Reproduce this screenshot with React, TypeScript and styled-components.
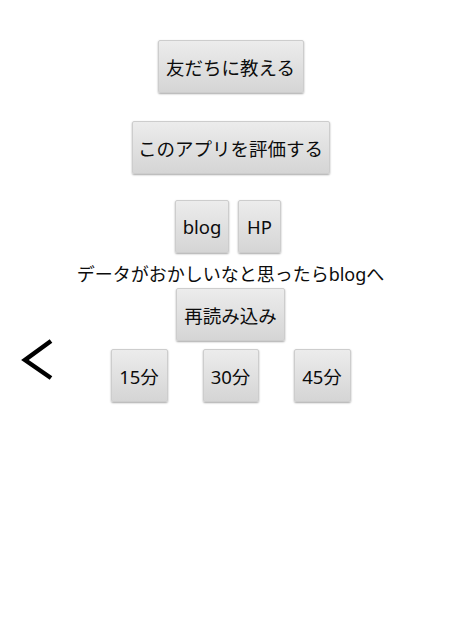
import styled, { createGlobalStyle } from "styled-components";

const GlobalStyle = createGlobalStyle`
  html, body {
    margin: 0;
    padding: 0;
    background: #ffffff;
  }
  body {
    font-family: "Noto Sans", "Noto Sans CJK JP", sans-serif;
    color: #111111;
  }
`;

const Screen = styled.div`
  position: relative;
  width: 461px;
  height: 640px;
  display: flex;
  flex-direction: column;
  align-items: center;
  padding-top: 40px;
  box-sizing: border-box;
`;

const Button = styled.button<{ $w: number; $mt?: number }>`
  width: ${(p) => p.$w}px;
  height: 53px;
  margin-top: ${(p) => p.$mt ?? 0}px;
  padding: 0;
  display: flex;
  align-items: center;
  justify-content: center;
  font-family: "Noto Sans", "Noto Sans CJK JP", sans-serif;
  font-size: 18.5px;
  color: #0c0c0c;
  background: linear-gradient(#ececec, #d5d5d5);
  border: 1px solid #cdcdcd;
  border-radius: 2px;
  box-shadow: 0 1px 2px rgba(0, 0, 0, 0.35);
  box-sizing: border-box;
  white-space: nowrap;
`;

const Row = styled.div<{ $gap: number; $mt: number; $shift?: number }>`
  display: flex;
  gap: ${(p) => p.$gap}px;
  margin-top: ${(p) => p.$mt}px;
  padding-right: ${(p) => p.$shift ?? 0}px;
`;

const Notice = styled.div`
  margin-top: 9px;
  font-size: 18px;
  line-height: 24px;
  color: #0c0c0c;
  white-space: nowrap;
`;

const BackArrow = styled.svg`
  position: absolute;
  left: 18px;
  top: 336px;
`;

export default function App() {
  return (
    <>
      <GlobalStyle />
      <Screen>
        <Button $w={146}>友だちに教える</Button>
        <Button $w={198} $mt={28}>このアプリを評価する</Button>
        <Row $gap={9} $mt={26} $shift={5}>
          <Button $w={54}>blog</Button>
          <Button $w={43}>HP</Button>
        </Row>
        <Notice>データがおかしいなと思ったらblogへ</Notice>
        <Button $w={109} $mt={2}>再読み込み</Button>
        <Row $gap={35} $mt={8}>
          <Button $w={57}>15分</Button>
          <Button $w={56}>30分</Button>
          <Button $w={57}>45分</Button>
        </Row>
        <BackArrow width="40" height="50" viewBox="0 0 40 50">
          <polyline
            points="33,5 7,24 33,42"
            fill="none"
            stroke="#000"
            strokeWidth="4.5"
          />
        </BackArrow>
      </Screen>
    </>
  );
}
